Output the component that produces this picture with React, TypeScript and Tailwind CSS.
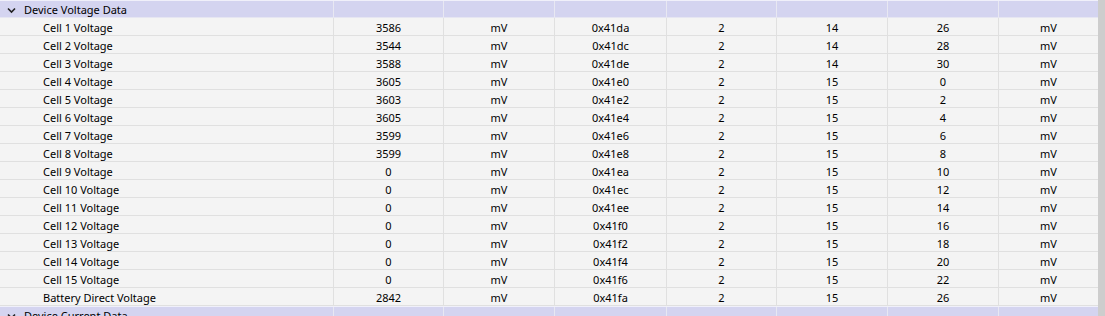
const rows: [string, string, string, string, string][] = [
  ["Cell 1 Voltage", "3586", "0x41da", "14", "26"],
  ["Cell 2 Voltage", "3544", "0x41dc", "14", "28"],
  ["Cell 3 Voltage", "3588", "0x41de", "14", "30"],
  ["Cell 4 Voltage", "3605", "0x41e0", "15", "0"],
  ["Cell 5 Voltage", "3603", "0x41e2", "15", "2"],
  ["Cell 6 Voltage", "3605", "0x41e4", "15", "4"],
  ["Cell 7 Voltage", "3599", "0x41e6", "15", "6"],
  ["Cell 8 Voltage", "3599", "0x41e8", "15", "8"],
  ["Cell 9 Voltage", "0", "0x41ea", "15", "10"],
  ["Cell 10 Voltage", "0", "0x41ec", "15", "12"],
  ["Cell 11 Voltage", "0", "0x41ee", "15", "14"],
  ["Cell 12 Voltage", "0", "0x41f0", "15", "16"],
  ["Cell 13 Voltage", "0", "0x41f2", "15", "18"],
  ["Cell 14 Voltage", "0", "0x41f4", "15", "20"],
  ["Cell 15 Voltage", "0", "0x41f6", "15", "22"],
  ["Battery Direct Voltage", "2842", "0x41fa", "15", "26"],
];

const grid =
  "grid grid-cols-[334px_110px_111px_112px_110px_111px_111px_99px]";

function Chevron() {
  return (
    <svg width="10" height="10" viewBox="0 0 10 10" className="shrink-0">
      <path d="M2 3.5 L5.5 7 L9 3.5" fill="none" stroke="#222" strokeWidth="1.6" />
    </svg>
  );
}

function GroupHeader({ title }: { title: string }) {
  return (
    <div className={`${grid} h-[18px] border-t border-t-[#f0f0fa] border-b border-b-[#e6e6f2] bg-[#d4d4f0]`}>
      <div className="flex items-center gap-[8px] border-r border-[#e8e8f2] pl-[6px] pt-px">
        <Chevron />
        <span>{title}</span>
      </div>
      {Array.from({ length: 6 }).map((_, i) => (
        <div key={i} className="border-r border-[#e8e8f2]" />
      ))}
      <div />
    </div>
  );
}

function Cell({ children, last }: { children?: React.ReactNode; last?: boolean }) {
  return (
    <div className={`flex items-center justify-center pt-px ${last ? "" : "border-r border-[#e0e0e0]"}`}>
      {children}
    </div>
  );
}

export default function App() {
  return (
    <div
      className="flex h-[316px] w-[1105px] overflow-hidden bg-white text-[11px] leading-[15px] text-black"
      style={{ fontFamily: '"Noto Sans", "Open Sans", sans-serif' }}
    >
      <div className="w-[1098px] bg-[#f4f4f4]">
        <GroupHeader title="Device Voltage Data" />
        {rows.map((r) => (
          <div key={r[0]} className={`${grid} h-[18px] border-b border-[#e0e0e0]`}>
            <div className="flex items-center border-r border-[#e0e0e0] pl-[43px] pt-px">{r[0]}</div>
            <Cell>{r[1]}</Cell>
            <Cell>mV</Cell>
            <Cell>{r[2]}</Cell>
            <Cell>2</Cell>
            <Cell>{r[3]}</Cell>
            <Cell>{r[4]}</Cell>
            <Cell last>mV</Cell>
          </div>
        ))}
        <GroupHeader title="Device Current Data" />
      </div>
      <div className="w-[7px] bg-[#cdcdcd]" />
    </div>
  );
}
